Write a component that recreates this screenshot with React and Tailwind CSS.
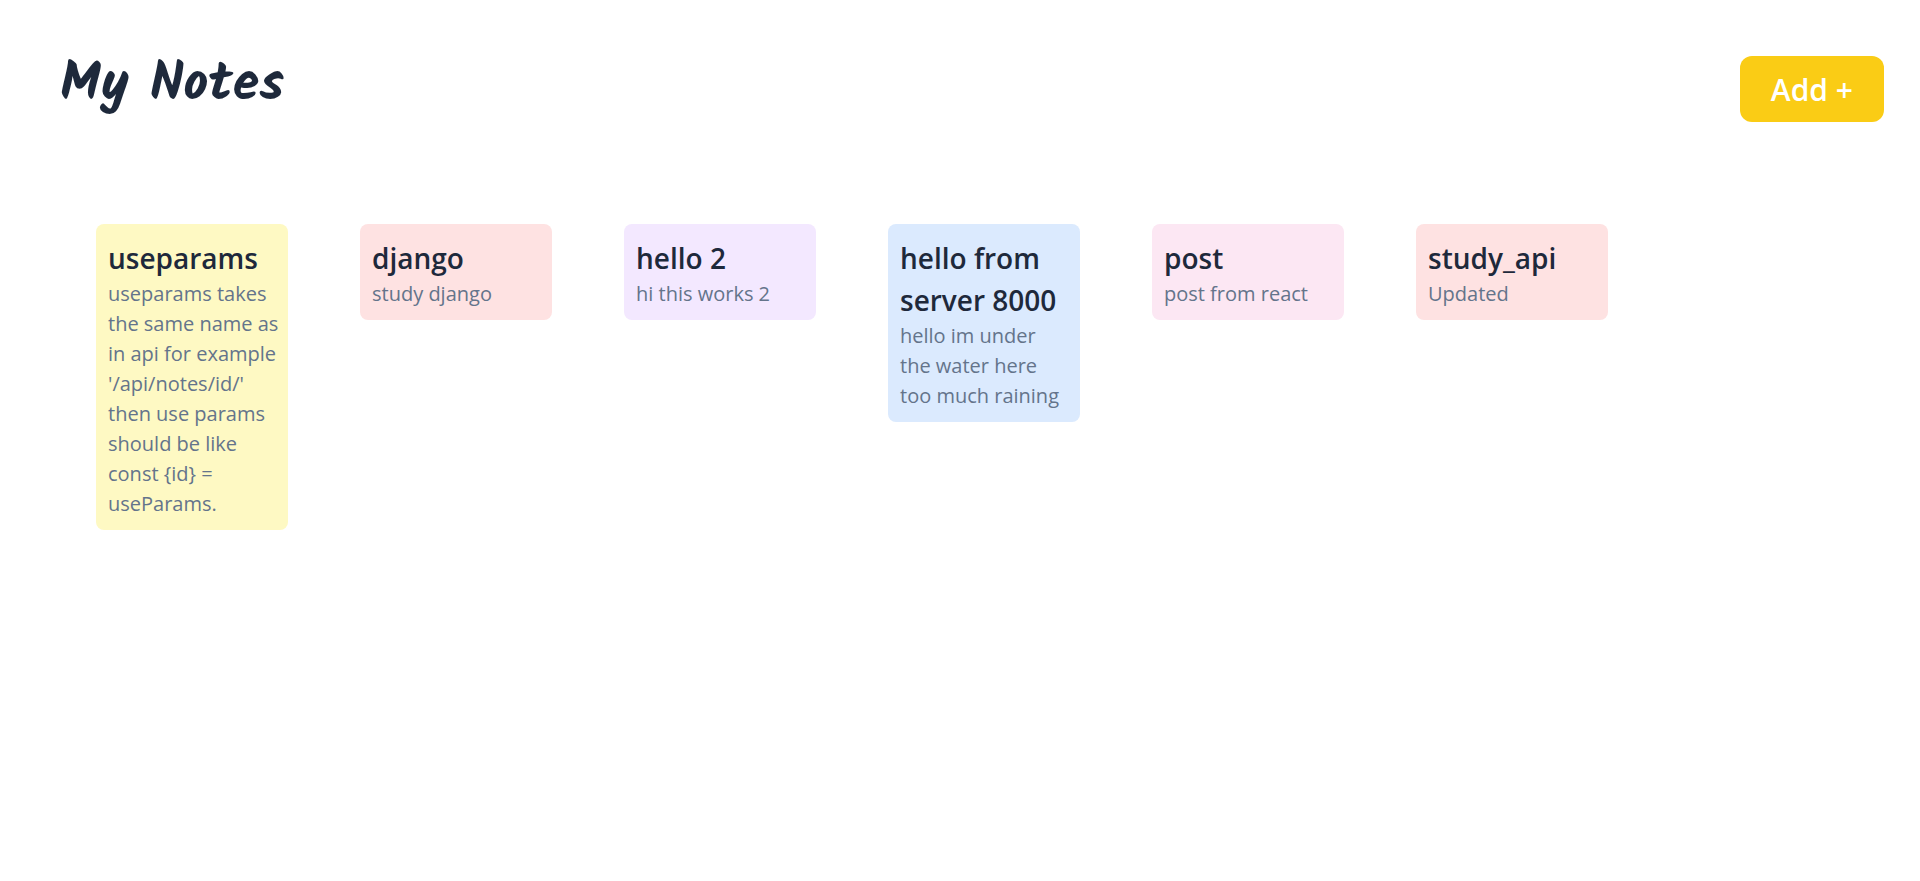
const notes = [
  {
    title: "useparams",
    body: "useparams takes the same name as in api for example '/api/notes/id/' then use params should be like const {id} = useParams.",
    color: "bg-[#fef9c3]",
  },
  { title: "django", body: "study django", color: "bg-[#fee2e2]" },
  { title: "hello 2", body: "hi this works 2", color: "bg-[#f3e8ff]" },
  {
    title: "hello from server 8000",
    body: "hello im under\nthe water here too much raining",
    color: "bg-[#dbeafe]",
  },
  { title: "post", body: "post from react", color: "bg-[#fce7f3]" },
  { title: "study_api", body: "Updated", color: "bg-[#fee2e2]" },
];

function Note({ title, body, color }) {
  return (
    <article className={`w-48 rounded-lg pt-[13px] pr-2 pb-[11px] pl-3 ${color}`}>
      <h2 className="text-[28px] leading-[42px] font-semibold text-[#1e293b]">{title}</h2>
      <p className="text-[20px] leading-[30px] whitespace-pre-line text-[#64748b]">{body}</p>
    </article>
  );
}

export default function App() {
  return (
    <div className="min-h-screen bg-white font-['Segoe_UI','Open_Sans',sans-serif]">
      <header className="flex items-start justify-between pt-14 pr-9 pl-15">
        <h1 className="font-['Kalam',cursive] text-[54px] leading-[60px] font-bold text-[#1e293b]">
          My Notes
        </h1>
        <button
          type="button"
          className="rounded-xl bg-[#facc15] px-[31px] pt-[13px] pb-[11px] text-[30px] leading-[42px] font-semibold text-white"
        >
          Add +
        </button>
      </header>
      <main className="flex flex-wrap items-start gap-18 px-24 pt-[102px] pb-18">
        {notes.map((note) => (
          <Note key={note.title} {...note} />
        ))}
      </main>
    </div>
  );
}
